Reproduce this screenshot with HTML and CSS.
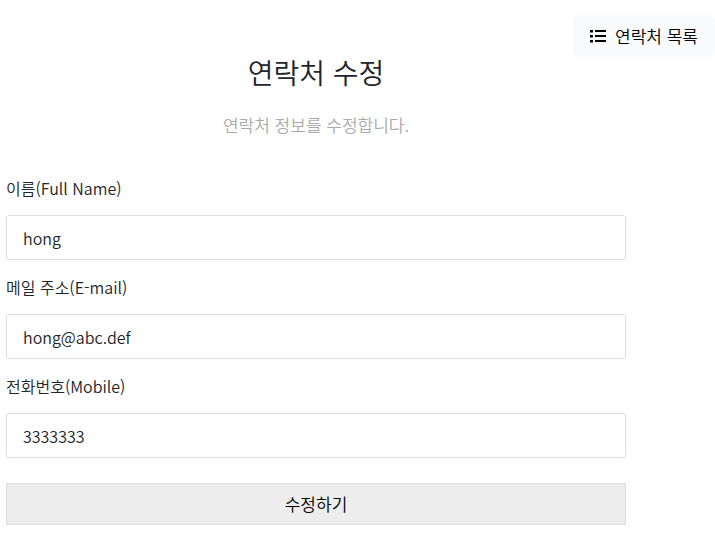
FILE: index.html
```
<!DOCTYPE html>
<html lang="ko">
<head>
  <meta charset="UTF-8" />
  <title>연락처 수정</title>
  <meta name="viewport" content="width=device-width, initial-scale=1.0" />
  <link rel="stylesheet" href="styles.css">
</head>
<body>

  <nav class="top-bar">
    <a class="btn-list" href="#">
      <!-- list icon -->
      <svg viewBox="0 0 16 14" aria-hidden="true" focusable="false">
        <path d="M0 1h3v2.5H0zM0 6h3v2.5H0zM0 11h3v2.5H0zM5 1h11v2H5zM5 6h11v2H5zM5 11h11v2H5z"/>
      </svg>
      <span>연락처 목록</span>
    </a>
  </nav>

  <main class="contact">
    <header class="contact-header">
      <h1>연락처 수정</h1>
      <p>연락처 정보를 수정합니다.</p>
    </header>

    <form class="contact-form">
      <div class="form-group">
        <label for="name">이름(Full Name)</label>
        <input type="text" id="name" name="name" value="hong">
      </div>
      <div class="form-group">
        <label for="email">메일 주소(E-mail)</label>
        <input type="email" id="email" name="email" value="hong@abc.def">
      </div>
      <div class="form-group">
        <label for="mobile">전화번호(Mobile)</label>
        <input type="tel" id="mobile" name="mobile" value="3333333">
      </div>
      <button class="btn-submit" type="submit">수정하기</button>
    </form>
  </main>

</body>
</html>
```
FILE: styles.css
```
* {
  box-sizing: border-box;
  margin: 0;
  padding: 0;
}

body {
  background: #fff;
  color: #212529;
  font-family: "Noto Sans CJK KR", sans-serif;
  font-size: 17px;
  font-weight: 350;
  line-height: 24px;
}

.top-bar {
  display: flex;
  justify-content: flex-end;
  padding-top: 15px;
}

.btn-list {
  display: flex;
  align-items: center;
  gap: 9px;
  padding: 9px 17px;
  border-radius: 6px;
  background: #f8fafc;
  color: #000;
  text-decoration: none;
}
.btn-list svg {
  width: 16px;
  height: 14px;
  fill: #000;
}

.contact {
  margin: 0 89px 0 6px;
}

.contact-header {
  text-align: center;
}
.contact-header h1 {
  font-size: 28px;
  font-weight: 350;
  line-height: 30px;
}
.contact-header p {
  margin-top: 26px;
  color: #aaa;
}

.contact-form {
  margin-top: 39px;
}

.form-group {
  margin-bottom: 15px;
}
.form-group label {
  display: block;
  margin-bottom: 15px;
  font-size: 16px;
}
.form-group input {
  display: block;
  width: 100%;
  height: 45px;
  padding: 0 16px;
  border: 1px solid #ddd;
  border-radius: 3px;
  background: #fff;
  color: #212529;
  font: inherit;
  font-size: 16px;
}

.btn-submit {
  display: block;
  width: 100%;
  height: 42px;
  margin-top: 25px;
  border: 1px solid #ddd;
  background: #ededed;
  color: #000;
  font: inherit;
  cursor: pointer;
}
```
